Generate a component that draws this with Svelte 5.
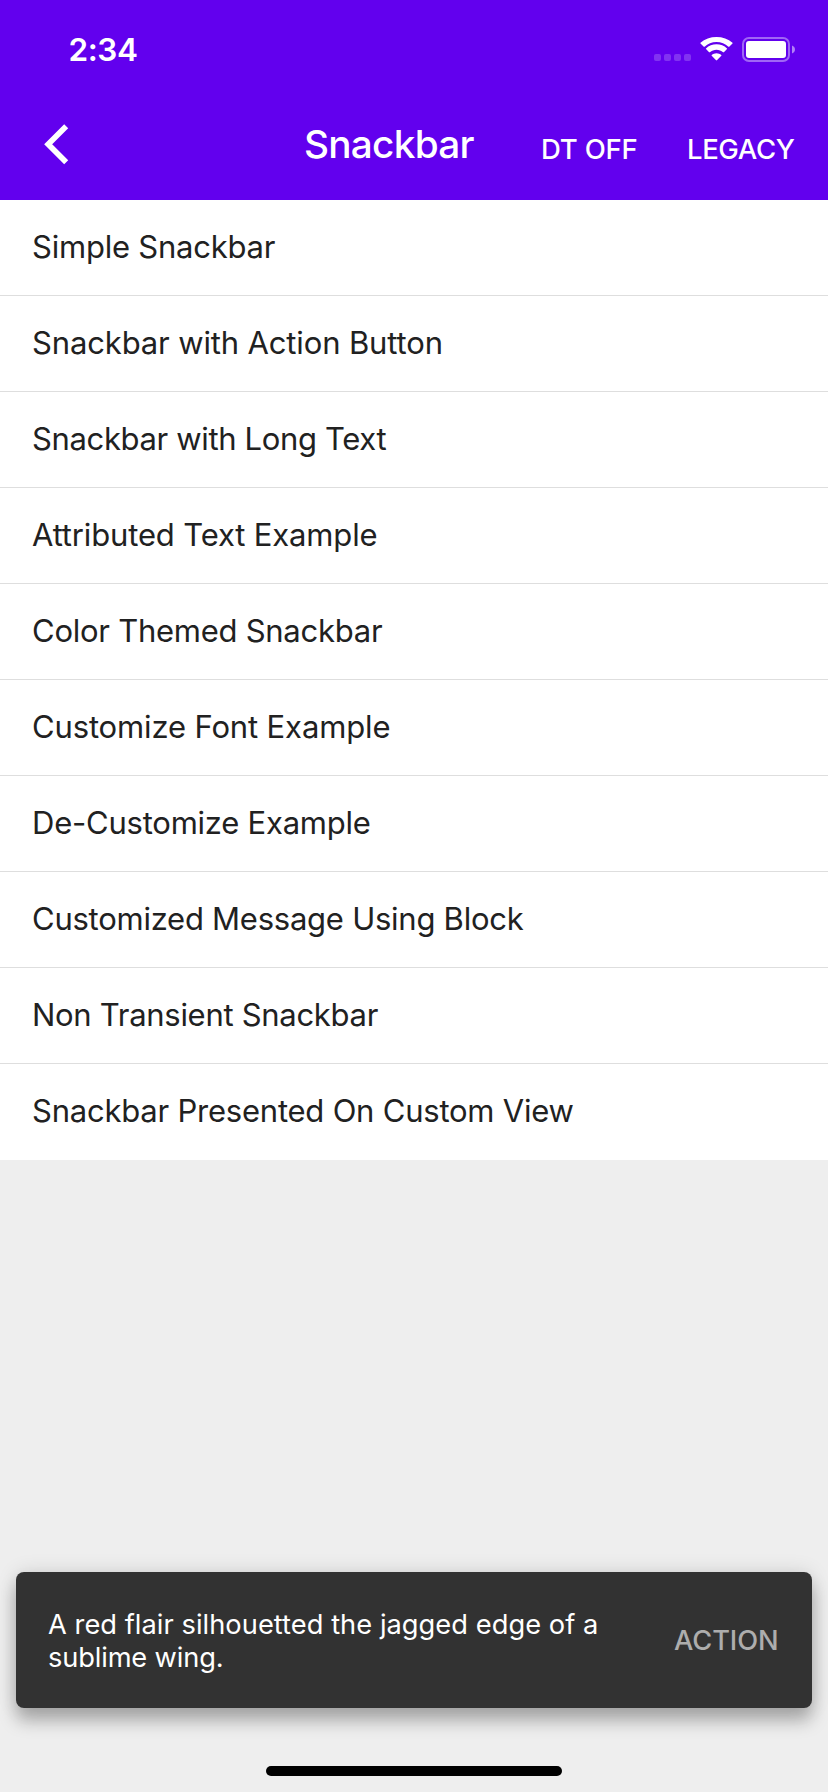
<script>
  const items = [
    { label: 'Simple Snackbar', spacing: -0.22 },
    { label: 'Snackbar with Action Button', spacing: -0.14 },
    { label: 'Snackbar with Long Text', spacing: -0.35 },
    { label: 'Attributed Text Example', spacing: -0.15 },
    { label: 'Color Themed Snackbar', spacing: -0.26 },
    { label: 'Customize Font Example', spacing: -0.14 },
    { label: 'De-Customize Example', spacing: -0.23 },
    { label: 'Customized Message Using Block', spacing: -0.25 },
    { label: 'Non Transient Snackbar', spacing: -0.29 },
    { label: 'Snackbar Presented On Custom View', spacing: -0.22 }
  ];
</script>

<div class="screen">
  <header>
    <div class="status">
      <span class="time">2:34</span>
      <svg class="indicators" width="142" height="26" viewBox="0 0 142 26" fill="#fff">
        <g opacity=".2">
          <rect x="0" y="17" width="7" height="7" rx="2" />
          <rect x="10" y="17" width="7" height="7" rx="2" />
          <rect x="20" y="17" width="7" height="7" rx="2" />
          <rect x="30" y="17" width="7" height="7" rx="2" />
        </g>
        <path d="M62.5 4.9c4.600 0 8.800 1.800 11.900 4.800.2.200.6.200.8 0l3.300-3.300c.2-.2.200-.5 0-.7C74.200 1.900 68.600 0 62.500 0S50.800 1.900 46.500 5.700c-.2.200-.2.500 0 .7l3.300 3.300c.2.200.6.200.8 0 3.100-3 7.300-4.800 11.900-4.800z" />
        <path d="M62.500 12.700c2.500 0 4.800.9 6.600 2.500.2.200.6.200.8 0l3.100-3.100c.2-.2.200-.5 0-.7-2.800-2.600-6.500-4.100-10.500-4.100s-7.700 1.500-10.500 4.100c-.2.200-.2.500 0 .7l3.100 3.100c.2.200.6.200.8 0 1.800-1.600 4.100-2.500 6.600-2.500z" />
        <path d="M67.300 18.100c.2.200.2.500 0 .7l-4.400 4.500c-.2.200-.6.200-.8 0l-4.400-4.500c-.2-.2-.2-.5 0-.7 1.300-1.100 3-1.800 4.800-1.800s3.500.7 4.800 1.800z" />
        <rect x="89" y="1" width="46" height="23" rx="6" fill="none" stroke="#fff" stroke-width="2" opacity=".4" />
        <rect x="92" y="4" width="40" height="17" rx="3" />
        <path d="M138 8.500c1.800.7 3 2.200 3 4s-1.200 3.300-3 4z" opacity=".5" />
      </svg>
    </div>
    <nav>
      <svg class="back" width="28" height="42" viewBox="0 0 28 42">
        <path d="M22.200 3.300 4.200 21.300l18 18" fill="none" stroke="#fff" stroke-width="5.700" />
      </svg>
      <h1>Snackbar</h1>
      <span class="bar-button dt">DT OFF</span>
      <span class="bar-button legacy">LEGACY</span>
    </nav>
  </header>

  <ul>
    {#each items as item}
      <li><span style="letter-spacing: {item.spacing}px">{item.label}</span></li>
    {/each}
  </ul>

  <div class="snackbar">
    <p><span class="l1">A red flair silhouetted the jagged edge of a</span><br /><span class="l2">sublime wing.</span></p>
    <span class="action">ACTION</span>
  </div>
  <div class="home"></div>
</div>

<style>
  :global(body) {
    margin: 0;
  }
  .screen {
    width: 828px;
    height: 1792px;
    display: flex;
    flex-direction: column;
    background: #eee;
    font-family: Inter, Roboto, sans-serif;
    overflow: hidden;
    white-space: nowrap;
  }
  header {
    height: 200px;
    flex: none;
    background: #6200ee;
    color: #fff;
  }
  .status {
    box-sizing: border-box;
    height: 88px;
    padding: 30px 32px 0 68.5px;
    display: flex;
    justify-content: space-between;
    align-items: flex-start;
  }
  .time {
    font-size: 31.5px;
    font-weight: 600;
    line-height: 40px;
    letter-spacing: -0.4px;
  }
  .indicators {
    margin-top: 7px;
  }
  nav {
    height: 112px;
    display: grid;
    grid-template-columns: 304px 237px 146px 1fr;
    align-items: start;
  }
  .back {
    margin: 35px 0 0 44px;
  }
  h1 {
    margin: 33px 0 0;
    font-size: 38.75px;
    font-weight: 500;
    line-height: 46px;
    letter-spacing: -0.75px;
  }
  .bar-button {
    margin-top: 44px;
    font-size: 27.5px;
    font-weight: 450;
    line-height: 34px;
    letter-spacing: -0.2px;
  }
  .legacy {
    letter-spacing: -0.4px;
  }
  ul {
    margin: 0;
    padding: 0;
    list-style: none;
    flex: none;
  }
  li {
    box-sizing: border-box;
    height: 96px;
    padding: 27px 32px 0;
    background: #fff;
    border-bottom: 1px solid #dedede;
    color: #212121;
    font-size: 31px;
    line-height: 40px;
  }
  li:last-child {
    border-bottom: 0;
  }
  .snackbar {
    box-sizing: border-box;
    height: 136px;
    flex: none;
    margin: auto 16px 0;
    padding: 1px 33.5px 0 32px;
    display: flex;
    align-items: center;
    justify-content: space-between;
    background: #323232;
    border-radius: 8px;
    color: #fff;
    font-size: 27.25px;
    line-height: 33px;
    box-shadow: 0 13px 17px rgba(0, 0, 0, 0.27), 0 0 20px rgba(0, 0, 0, 0.12);
  }
  p {
    margin: 1px 0 0;
  }
  .l1 {
    letter-spacing: 0.04px;
  }
  .l2 {
    letter-spacing: -0.15px;
  }
  .action {
    font-weight: 450;
    letter-spacing: -0.1px;
    color: #adadad;
  }
  .home {
    flex: none;
    width: 296px;
    height: 10px;
    margin: 58px auto 16px;
    border-radius: 5px;
    background: #000;
  }
</style>
